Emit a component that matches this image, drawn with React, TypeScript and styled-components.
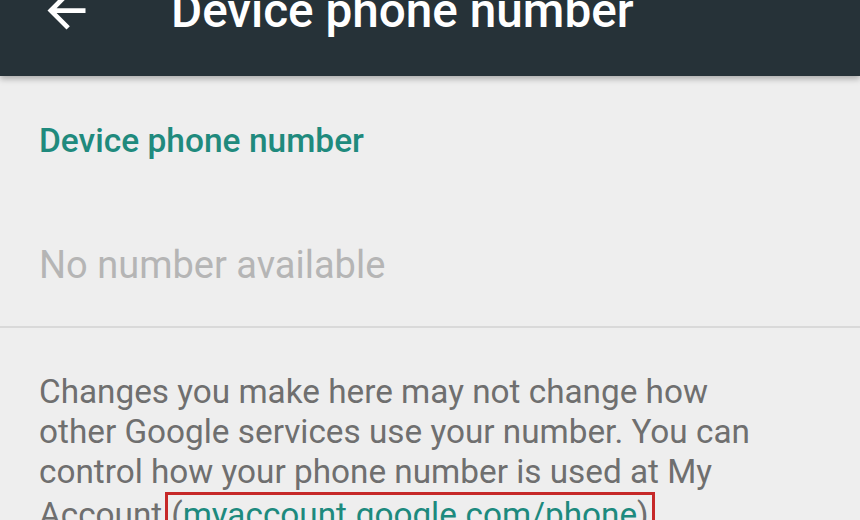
import styled, { createGlobalStyle } from 'styled-components';

const GlobalStyle = createGlobalStyle`
  html, body {
    margin: 0;
    padding: 0;
    background: #eeeeee;
  }
  body {
    font-family: Roboto, "Noto Sans", "Liberation Sans", sans-serif;
  }
`;

/** Settings screen showing the device phone number */
export default function App() {
  return (
    <>
      <GlobalStyle />
      <Screen>
        <AppBar>
          <BackButton aria-label="Back">
            <svg width="57" height="57" viewBox="0 0 24 24" fill="#ffffff">
              <path d="M20 11H7.83l5.59-5.59L12 4l-8 8 8 8 1.41-1.41L7.83 13H20v-2z" />
            </svg>
          </BackButton>
          <Title>Device phone number</Title>
        </AppBar>

        <Section>
          <SectionTitle>Device phone number</SectionTitle>
          <Value>No number available</Value>
        </Section>

        <Divider />

        <Section>
          <Note>
            Changes you make here may not change how other Google services use your number. You can
            control how your phone number is used at My Account
            <Highlight>
              (<Link href="#">myaccount.google.com/phone</Link>)
            </Highlight>
            .
          </Note>
        </Section>
      </Screen>
    </>
  );
}

const Screen = styled.div`
  width: 860px;
  height: 520px;
  overflow: hidden;
  background: #eeeeee;
`;

const AppBar = styled.header`
  position: relative;
  z-index: 1;
  height: 76px;
  display: flex;
  align-items: flex-start;
  background: #263238;
  box-shadow: 0 3px 6px rgba(0, 0, 0, 0.28);
`;

const BackButton = styled.button`
  display: flex;
  padding: 0;
  margin: -18px 0 0 38px;
  border: none;
  background: none;
  cursor: pointer;
`;

const Title = styled.h1`
  margin: -12px 0 0 76px;
  font-size: 47.7px;
  line-height: 46px;
  font-weight: 500;
  color: #ffffff;
  white-space: nowrap;
`;

const Section = styled.div`
  padding: 0 39px;
`;

const SectionTitle = styled.div`
  margin-top: 45px;
  font-size: 33.5px;
  line-height: 40px;
  font-weight: 500;
  color: #1f8a7d;
`;

const Value = styled.div`
  margin-top: 82px;
  font-size: 38px;
  line-height: 44px;
  color: #b5b5b5;
`;

const Divider = styled.hr`
  margin: 39px 0 0;
  border: none;
  height: 2px;
  background: #d9d9d9;
`;

const Note = styled.p`
  max-width: 720px;
  margin: 44px 0 0;
  font-size: 33.3px;
  line-height: 40px;
  color: #6f6f6f;
`;

const Highlight = styled.span`
  display: inline-block;
  margin-left: 3px;
  padding: 0 3px;
  border: 3px solid #c62828;
  line-height: 40px;
`;

const Link = styled.a`
  color: #1d8a7e;
  text-decoration: none;
`;
